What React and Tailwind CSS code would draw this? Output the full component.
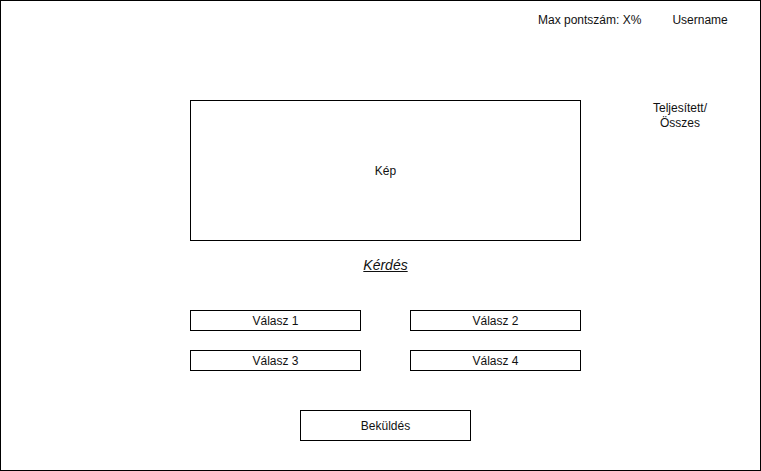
export default function App() {
  return (
    <div className="w-[761px] h-[471px] border border-black bg-white font-['Liberation_Sans',Arial,sans-serif] text-[12px] leading-[14px] text-[#111]">
      <div className="flex pt-[12px] pl-[537px]">
        <span>Max pontszám: X%</span>
        <span className="ml-[31px]">Username</span>
      </div>
      <div className="flex mt-[73px]">
        <div className="ml-[189px] w-[391px] flex flex-col">
          <div className="h-[141px] border border-black flex items-center justify-center">Kép</div>
          <div className="mt-[16px] text-center text-[14px] leading-[16px] italic underline">Kérdés</div>
          <div className="mt-[37px] grid grid-cols-2 gap-x-[49px] gap-y-[19px]">
            <div className="h-[21px] border border-black flex items-center justify-center">Válasz 1</div>
            <div className="h-[21px] border border-black flex items-center justify-center">Válasz 2</div>
            <div className="h-[21px] border border-black flex items-center justify-center">Válasz 3</div>
            <div className="h-[21px] border border-black flex items-center justify-center">Válasz 4</div>
          </div>
          <div className="mt-[39px] mx-auto w-[171px] h-[31px] border border-black flex items-center justify-center">Beküldés</div>
        </div>
        <div className="ml-[59px] w-[80px] text-center pt-[1px] leading-[15px]">
          Teljesített/
          <br />
          Összes
        </div>
      </div>
    </div>
  );
}
